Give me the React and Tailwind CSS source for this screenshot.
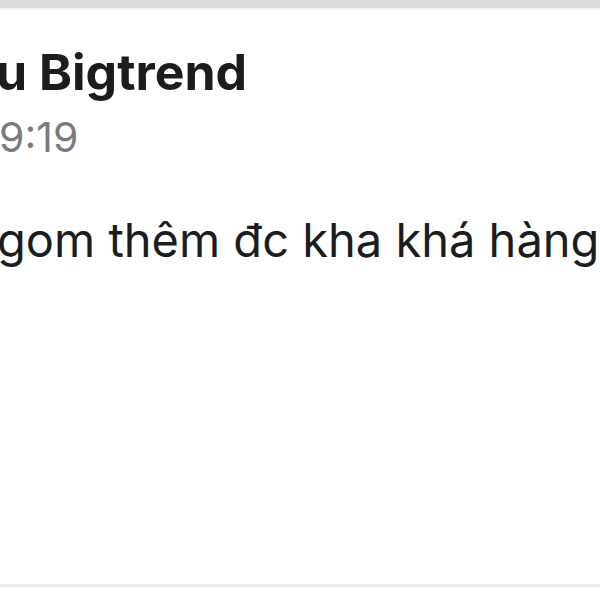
export default function App() {
  return (
    <div className="w-[600px] h-[600px] overflow-hidden bg-white flex flex-col" style={{ fontFamily: "Inter, 'Noto Sans', sans-serif" }}>
      <div className="h-[8px] bg-[#dcdcdc] shrink-0" />
      <div className="h-[2px] bg-[#f4f4f4] shrink-0" />
      <div className="flex-1 flex flex-col">
        <div className="mt-[32px] whitespace-nowrap text-[50px] leading-[60px] font-bold text-[#1c1c1e] -ml-[4px]">u Bigtrend</div>
        <div className="mt-[11px] whitespace-nowrap text-[41px] leading-[48px] text-[#7b7b7f] -ml-[1px]">9:19</div>
        <div className="mt-[51px] whitespace-nowrap text-[47px] leading-[56px] text-[#1c1c1e] -ml-[3px]">gom thêm đc kha khá hàng</div>
      </div>
      <div className="h-[3px] bg-[#ececec] shrink-0" />
      <div className="h-[13px] bg-white shrink-0" />
    </div>
  );
}
